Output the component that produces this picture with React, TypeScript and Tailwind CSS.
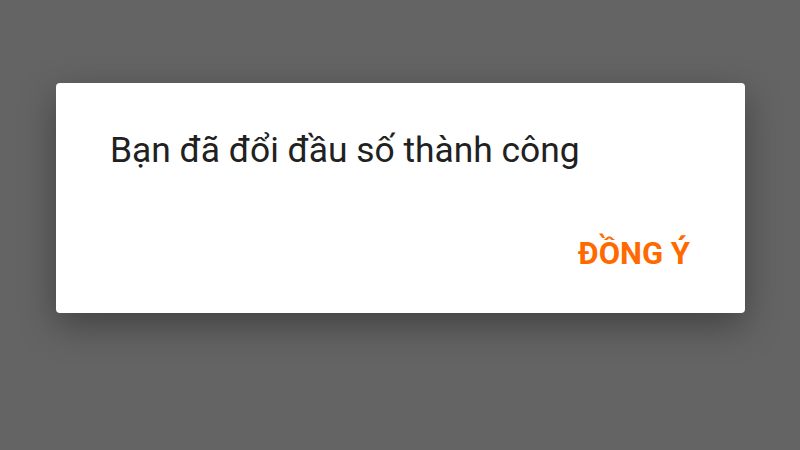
export default function App() {
  return (
    <div
      className="w-[800px] h-[450px] bg-[#646464] overflow-hidden"
      style={{ fontFamily: "Roboto, 'Noto Sans', sans-serif" }}
    >
      <div className="ml-[56px] mt-[83px] w-[689px] h-[230px] bg-white rounded-[4px] shadow-[0_12px_36px_rgba(0,0,0,0.35)] flex flex-col">
        <p className="pl-[54px] pt-[47px] text-[35.4px] leading-[41px] text-[#212121]">
          Bạn đã đổi đầu số thành công
        </p>
        <div className="flex justify-end pr-[55px] mt-[65px]">
          <button className="text-[31px] leading-[35px] font-bold text-[#ff6a00]">
            ĐỒNG Ý
          </button>
        </div>
      </div>
    </div>
  );
}
